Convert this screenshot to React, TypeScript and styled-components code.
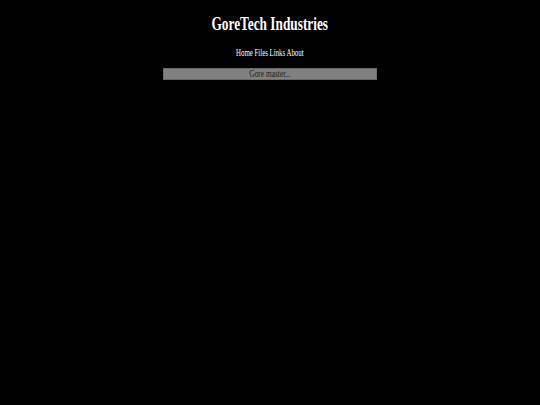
import React from "react";
import styled, { createGlobalStyle } from "styled-components";

const GlobalStyle = createGlobalStyle`
  html, body {
    margin: 0;
    padding: 0;
    background: #000;
    height: 100%;
  }
  #root {
    min-height: 100%;
  }
`;

const Page = styled.div`
  background: #000;
  width: 100%;
  min-height: 405px;
  display: flex;
  flex-direction: column;
  align-items: center;
  font-family: "Liberation Serif", "Times New Roman", serif;
  color: #fff;
`;

const Narrow = styled.span<{ $scale?: number }>`
  display: inline-block;
  transform: scaleX(${(p) => p.$scale ?? 0.74});
  transform-origin: center;
  white-space: nowrap;
`;

const Title = styled.h1`
  margin: 13px 0 0;
  font-size: 18px;
  line-height: 22px;
  font-weight: bold;
  text-align: center;
`;

const Nav = styled.nav`
  margin-top: 12px;
  font-size: 9.5px;
  line-height: 12px;
  text-align: center;
`;

const NavLink = styled.a`
  color: #fff;
  text-decoration: none;
`;

const Status = styled.div`
  margin-top: 9px;
  width: 214px;
  height: 12px;
  box-sizing: border-box;
  background: #808080;
  border: 1px solid #6a6a6a;
  color: #222;
  font-size: 10px;
  line-height: 10px;
  text-align: center;
`;

const links = ["Home", "Files", "Links", "About"];

export default function App() {
  return (
    <>
      <GlobalStyle />
      <Page>
        <Title>
          <Narrow>GoreTech Industries</Narrow>
        </Title>
        <Nav>
          <Narrow $scale={0.72}>
            {links.map((l, i) => (
              <React.Fragment key={l}>
                {i > 0 && " "}
                <NavLink href="#">{l}</NavLink>
              </React.Fragment>
            ))}
          </Narrow>
        </Nav>
        <Status>
          <Narrow>Gore master...</Narrow>
        </Status>
      </Page>
    </>
  );
}
